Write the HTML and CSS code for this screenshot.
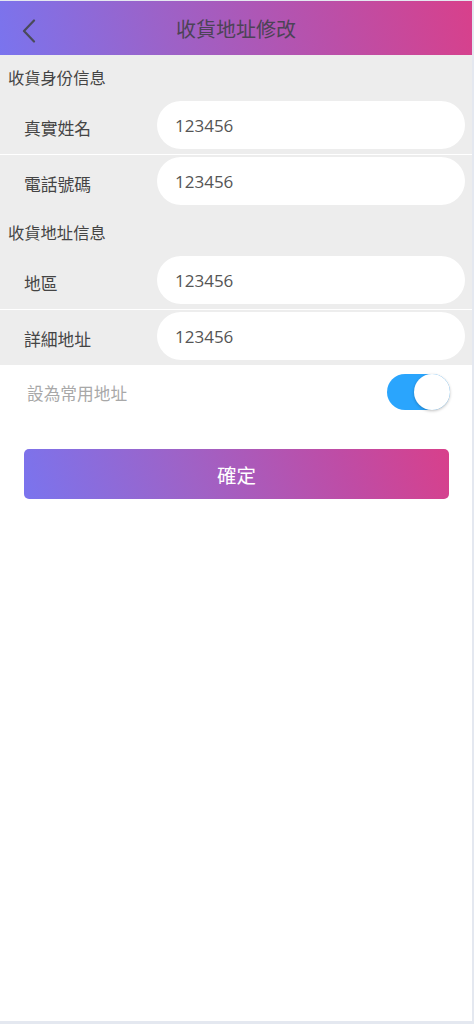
FILE: index.html
```html
<!DOCTYPE html>
<html lang="zh-Hant">
<head>
<meta charset="utf-8">
<title>收貨地址修改</title>
<link rel="stylesheet" href="styles.css">
</head>
<body>
<div class="app">
  <header class="header">
    <span class="back">
      <svg width="14" height="24" viewBox="0 0 14 24"><path d="M12 1.5 L2 12 L12 22.5" fill="none" stroke="#4a4a5a" stroke-width="2.2" stroke-linecap="round" stroke-linejoin="round"/></svg>
    </span>
    <h1 class="title">收貨地址修改</h1>
  </header>
  <main class="form">
    <div class="section-title">收貨身份信息</div>
    <div class="row row-line">
      <span class="label">真實姓名</span>
      <div class="input">123456</div>
    </div>
    <div class="row">
      <span class="label">電話號碼</span>
      <div class="input">123456</div>
    </div>
    <div class="section-title">收貨地址信息</div>
    <div class="row row-line">
      <span class="label">地區</span>
      <div class="input">123456</div>
    </div>
    <div class="row">
      <span class="label">詳細地址</span>
      <div class="input">123456</div>
    </div>
  </main>
  <div class="setting">
    <span class="setting-label">設為常用地址</span>
    <span class="toggle"><span class="knob"></span></span>
  </div>
  <button class="submit">確定</button>
</div>
</body>
</html>
```
FILE: styles.css
```css
html, body {
  margin: 0;
  padding: 0;
}
body {
  background: #e4e8f0;
  font-family: "Noto Sans CJK TC", "Noto Sans", sans-serif;
}
.app {
  width: 472px;
  height: 1020px;
  margin-top: 1px;
  background: #ffffff;
  display: flex;
  flex-direction: column;
}
.header {
  height: 54px;
  display: flex;
  align-items: center;
  justify-content: center;
  position: relative;
  background: linear-gradient(75deg, #7a74ee 0%, #9c62c8 35%, #bb4fa8 70%, #d8408b 100%);
}
.back {
  position: absolute;
  left: 22px;
  top: 18px;
  width: 14px;
  height: 24px;
  display: block;
}
.back svg {
  display: block;
}
.title {
  margin: 0;
  font-size: 20px;
  font-weight: 400;
  color: #4c4356;
}
.form {
  background: #ededed;
}
.section-title {
  height: 44px;
  line-height: 44px;
  padding-left: 8px;
  font-size: 16.3px;
  color: #444;
}
.row {
  display: flex;
  align-items: center;
  padding: 2px 7px 5px 24px;
}
.row-line {
  border-bottom: 1px solid #ffffff;
}
.label {
  width: 133px;
  font-size: 16.8px;
  color: #444;
  padding-top: 5px;
}
.input {
  flex: 1;
  height: 48px;
  line-height: 49px;
  background: #ffffff;
  border-radius: 24px;
  padding-left: 18px;
  font-family: "Open Sans", "Noto Sans", sans-serif;
  font-size: 17px;
  color: #555;
  box-sizing: border-box;
}
.setting {
  height: 56px;
  display: flex;
  align-items: center;
  justify-content: space-between;
  padding: 0 22px 0 27px;
}
.setting-label {
  font-size: 16.7px;
  color: #a8a8a8;
}
.toggle {
  width: 63px;
  height: 36px;
  border-radius: 18px;
  background: #2aa5fd;
  position: relative;
  display: block;
  margin-top: -2px;
}
.knob {
  position: absolute;
  right: 0;
  top: 0;
  width: 36px;
  height: 36px;
  border-radius: 50%;
  background: #fff;
  box-shadow: 0 1px 3px rgba(0,0,0,0.25);
}
.submit {
  margin: 28px 23px 0 24px;
  height: 50px;
  border: 0;
  border-radius: 5px;
  background: linear-gradient(70deg, #7a74ee 0%, #9f62c6 40%, #bf4ca5 75%, #d8408b 100%);
  color: #fff;
  font-family: "Noto Sans CJK TC", "Noto Sans", sans-serif;
  font-size: 19.5px;
  padding: 0;
}
```
